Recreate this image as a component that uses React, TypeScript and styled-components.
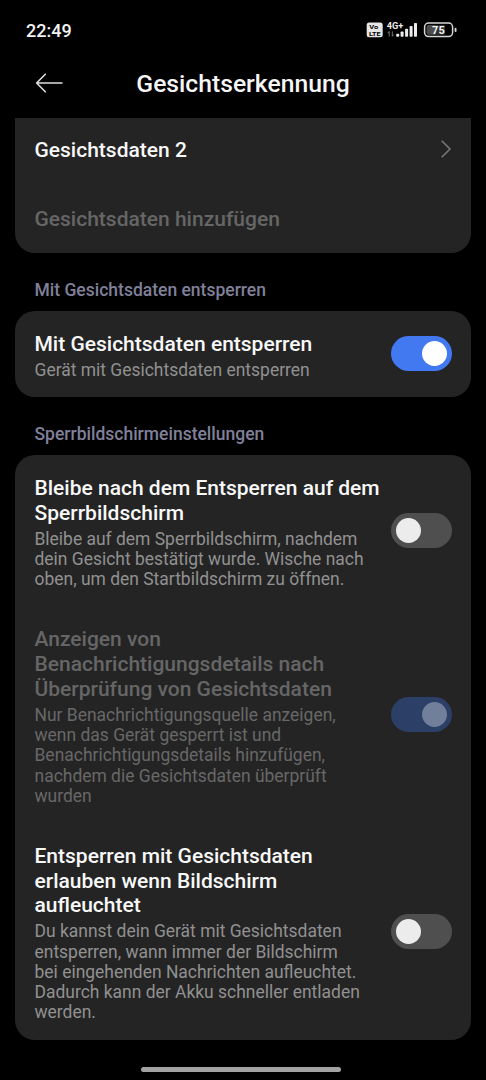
import React, { Fragment } from "react";
import styled, { createGlobalStyle } from "styled-components";

const GlobalStyle = createGlobalStyle`
  * { box-sizing: border-box; }
  html, body { margin: 0; padding: 0; background: #000; overflow: hidden; }
  body { font-family: Roboto, "Liberation Sans", sans-serif; }
  h1, h2, h3, p { margin: 0; }
`;

const Screen = styled.div`
  display: flex;
  flex-direction: column;
  width: 486px;
  height: 1080px;
  background: #000;
  overflow: hidden;
`;

const StatusBar = styled.header`
  display: flex;
  align-items: center;
  justify-content: space-between;
  height: 60px;
  padding: 0 29px 0 26px;
  flex: none;
`;

const Clock = styled.span`
  font-size: 18px;
  font-weight: 500;
  color: #f2f2f2;
`;

const StatusIcons = styled.div`
  display: flex;
  align-items: center;
  height: 20px;
`;

const TitleBar = styled.div`
  display: grid;
  grid-template-columns: 100px 1fr 100px;
  align-items: center;
  height: 58px;
  padding-bottom: 10px;
  flex: none;
`;

const BackButton = styled.button`
  display: flex;
  padding: 0 0 0 35px;
  border: 0;
  background: none;
  margin-top: -3px;
`;

const PageTitle = styled.h1`
  font-size: 24.7px;
  line-height: 30px;
  font-weight: 500;
  color: #f6f6f6;
  text-align: center;
  white-space: nowrap;
`;

const Content = styled.main`
  display: flex;
  flex-direction: column;
  padding: 0 15px;
`;

const Card = styled.section<{ $cut?: boolean }>`
  background: #242424;
  border-radius: ${(p) => (p.$cut ? "0 0 20px 20px" : "20px")};
`;

const LinkRow = styled.div<{ $height: number; $top?: number }>`
  display: flex;
  align-items: center;
  justify-content: space-between;
  height: ${(p) => p.$height}px;
  padding: ${(p) => p.$top ?? 0}px 19.5px 0;
`;

const Chevron = styled.svg`
  width: 12px;
  height: 20px;
  margin-bottom: 2px;
  fill: none;
  stroke: #777;
  stroke-width: 1.6px;
`;

const SettingRow = styled.div`
  display: flex;
  align-items: center;
  justify-content: space-between;
  padding: 20.6px 19px 17.2px 19.5px;
`;

const RowText = styled.div`
  display: flex;
  flex-direction: column;
  gap: 3.6px;
  white-space: nowrap;
`;

const RowTitle = styled.h3<{ $dim?: boolean }>`
  font-size: 21px;
  line-height: 24.65px;
  font-weight: 500;
  color: ${(p) => (p.$dim ? "#666" : "#f8f8f8")};
`;

const RowNote = styled.p<{ $dim?: boolean }>`
  font-size: 17.47px;
  line-height: 20.25px;
  color: ${(p) => (p.$dim ? "#686868" : "#919191")};
`;

const SectionLabel = styled.h2`
  display: flex;
  align-items: center;
  height: 58px;
  padding: 16.4px 0 0 19.5px;
  font-size: 17.5px;
  line-height: 20px;
  font-weight: 500;
  color: #80809a;
`;

const Track = styled.button<{ $on?: boolean; $dim?: boolean }>`
  display: flex;
  align-items: center;
  justify-content: ${(p) => (p.$on ? "flex-end" : "flex-start")};
  width: 61px;
  height: 35px;
  margin: 0 0 4px;
  padding: 0 5px 0 4.5px;
  border: 0;
  border-radius: 18px;
  flex: none;
  background: ${(p) => (p.$on ? (p.$dim ? "#2c3f66" : "#4278f0") : "#4f4f4f")};
`;

const Knob = styled.span<{ $on?: boolean; $dim?: boolean }>`
  width: 25px;
  height: 25px;
  border-radius: 50%;
  background: ${(p) => (p.$on ? (p.$dim ? "#727f9a" : "#fff") : "#ececec")};
`;

const GestureBar = styled.div`
  width: 200px;
  height: 5px;
  margin: auto auto 8px 141px;
  border-radius: 3px;
  background: #a3a3a3;
  flex: none;
`;

const Lines = ({ lines }: { lines: string[] }) => (
  <>
    {lines.map((line, i) => (
      <Fragment key={line}>
        {i > 0 && <br />}
        {line}
      </Fragment>
    ))}
  </>
);

type SettingProps = { title: string[]; note: string[]; on?: boolean; dim?: boolean };

const Setting = ({ title, note, on, dim }: SettingProps) => (
  <SettingRow>
    <RowText>
      <RowTitle $dim={dim}><Lines lines={title} /></RowTitle>
      <RowNote $dim={dim}><Lines lines={note} /></RowNote>
    </RowText>
    <Track $on={on} $dim={dim} role="switch" aria-checked={!!on} disabled={dim}>
      <Knob $on={on} $dim={dim} />
    </Track>
  </SettingRow>
);

const SignalIcons = () => (
  <svg width="91" height="20" viewBox="366 20 91 20" fontFamily="Roboto, sans-serif" fontWeight="700">
    <rect x="366.7" y="22.6" width="16" height="14.6" rx="2.5" fill="#e6e6e6" />
    <text x="369.2" y="28.9" fontSize="6.2" fill="#000" textLength="9" lengthAdjust="spacingAndGlyphs">Vo</text>
    <text x="369" y="36.1" fontSize="6.2" fill="#000" textLength="11.6" lengthAdjust="spacingAndGlyphs">LTE</text>
    <text x="386.8" y="28.6" fontSize="9.4" fill="#ececec" textLength="16.5" lengthAdjust="spacingAndGlyphs">4G+</text>
    <path d="M389.2 36.5V31.5L387.7 33.2M392.3 31.3V36.3L393.8 34.6" stroke="#777" strokeWidth="1" fill="none" />
    <g fill="#ececec">
      <rect x="396.2" y="33.8" width="3" height="3" rx="0.8" />
      <rect x="400.6" y="31.4" width="3" height="5.4" rx="0.8" />
      <rect x="405.1" y="28.8" width="3" height="8" rx="0.8" />
      <rect x="409.6" y="26" width="3" height="10.8" rx="0.8" />
      <rect x="414" y="23" width="3" height="13.8" rx="0.8" />
    </g>
    <rect x="426.5" y="25" width="11" height="9.8" rx="2" fill="#4c4c4c" />
    <rect x="436" y="25" width="9" height="9.8" rx="1" fill="#303030" />
    <rect x="424.6" y="23" width="28" height="13.6" rx="4" fill="none" stroke="#d6d6d6" strokeWidth="1.5" />
    <rect x="454.6" y="27.8" width="1.9" height="4.2" rx="0.9" fill="#d6d6d6" />
    <text x="438.4" y="33.7" fontSize="11" fill="#f2f2f2" textAnchor="middle">75</text>
  </svg>
);

export default function App() {
  return (
    <>
      <GlobalStyle />
      <Screen>
        <StatusBar>
          <Clock>22:49</Clock>
          <StatusIcons><SignalIcons /></StatusIcons>
        </StatusBar>
        <TitleBar>
          <BackButton aria-label="Zurück">
            <svg width="28" height="20" viewBox="0 0 28 20" fill="none" stroke="#dedede" strokeWidth="1.6" strokeLinecap="round" strokeLinejoin="round">
              <path d="M10.3 1.2L1.6 10L10.3 18.8M1.6 10H27" />
            </svg>
          </BackButton>
          <PageTitle>Gesichtserkennung</PageTitle>
        </TitleBar>
        <Content>
          <Card $cut>
            <LinkRow $height={64}>
              <RowTitle>Gesichtsdaten 2</RowTitle>
              <Chevron viewBox="0 0 12 20">
                <path d="M1.7 1.7L10 10L1.7 18.3" />
              </Chevron>
            </LinkRow>
            <LinkRow $height={71} $top={4}>
              <RowTitle $dim>Gesichtsdaten hinzufügen</RowTitle>
            </LinkRow>
          </Card>
          <SectionLabel>Mit Gesichtsdaten entsperren</SectionLabel>
          <Card>
            <Setting on title={["Mit Gesichtsdaten entsperren"]} note={["Gerät mit Gesichtsdaten entsperren"]} />
          </Card>
          <SectionLabel>Sperrbildschirmeinstellungen</SectionLabel>
          <Card>
            <Setting
              title={["Bleibe nach dem Entsperren auf dem", "Sperrbildschirm"]}
              note={[
                "Bleibe auf dem Sperrbildschirm, nachdem",
                "dein Gesicht bestätigt wurde. Wische nach",
                "oben, um den Startbildschirm zu öffnen.",
              ]}
            />
            <Setting
              on
              dim
              title={["Anzeigen von", "Benachrichtigungsdetails nach", "Überprüfung von Gesichtsdaten"]}
              note={[
                "Nur Benachrichtigungsquelle anzeigen,",
                "wenn das Gerät gesperrt ist und",
                "Benachrichtigungsdetails hinzufügen,",
                "nachdem die Gesichtsdaten überprüft",
                "wurden",
              ]}
            />
            <Setting
              title={["Entsperren mit Gesichtsdaten", "erlauben wenn Bildschirm", "aufleuchtet"]}
              note={[
                "Du kannst dein Gerät mit Gesichtsdaten",
                "entsperren, wann immer der Bildschirm",
                "bei eingehenden Nachrichten aufleuchtet.",
                "Dadurch kann der Akku schneller entladen",
                "werden.",
              ]}
            />
          </Card>
        </Content>
        <GestureBar />
      </Screen>
    </>
  );
}
